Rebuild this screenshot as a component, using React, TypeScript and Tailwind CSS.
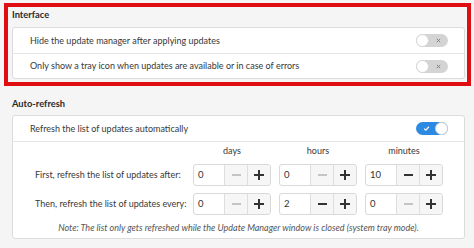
import React from "react";

function Toggle({ on }: { on: boolean }) {
  if (on) {
    return (
      <div className="relative h-[13px] w-[32px] rounded-full bg-[#2d8ae2]">
        <svg className="absolute left-[7px] top-[3px]" width="7" height="7" viewBox="0 0 8 8">
          <path d="M1.2 4.2 L3.2 6 L6.8 2" fill="none" stroke="#fff" strokeWidth="1.3" />
        </svg>
        <div className="absolute right-[0px] top-[0px] h-[13px] w-[13px] rounded-full border border-[#d6d6d6] bg-white" />
      </div>
    );
  }
  return (
    <div className="relative h-[13px] w-[32px] rounded-full bg-[#d4d4d4]">
      <div className="absolute left-[0px] top-[0px] h-[13px] w-[13px] rounded-full border border-[#d6d6d6] bg-white" />
      <svg className="absolute right-[7px] top-[4px]" width="5" height="5" viewBox="0 0 6 6">
        <path d="M1 1 L5 5 M5 1 L1 5" fill="none" stroke="#7d7d7d" strokeWidth="1.1" />
      </svg>
    </div>
  );
}

function Spin({ value }: { value: number }) {
  const canDec = value > 0;
  return (
    <div className="flex h-[22px] w-[78px] rounded-[3px] border border-[#d9d9d9] bg-white text-[9.5px] text-[#333]">
      <div className="flex w-[30px] items-center pl-[4px]">{value}</div>
      <div className="flex w-[23px] items-center justify-center border-l border-[#dedede] bg-[#f6f6f6]">
        <div className={`h-[1.5px] w-[9px] ${canDec ? "bg-[#333]" : "bg-[#c4c4c4]"}`} />
      </div>
      <div className="relative flex w-[23px] items-center justify-center rounded-r-[3px] border-l border-[#dedede] bg-[#f6f6f6]">
        <div className="h-[1.5px] w-[10px] bg-[#333]" />
        <div className="absolute h-[10px] w-[1.5px] bg-[#333]" />
      </div>
    </div>
  );
}

export default function App() {
  const rows = [
    { label: "First, refresh the list of updates after:", values: [0, 0, 10] },
    { label: "Then, refresh the list of updates every:", values: [0, 2, 0] },
  ];

  return (
    <main
      className="h-[248px] w-[474px] overflow-hidden bg-[#f5f5f6] pt-[3px] text-[#383838]"
      style={{ fontFamily: 'Lato, "Noto Sans", sans-serif' }}
    >
      <section className="ml-[4px] w-[467px] border-[4px] border-[#e00d12] pb-[3px] pl-[4px] pr-[2px]">
        <h2 className="h-[16px] text-[9.3px] font-bold leading-[16px] text-[#2a2a2a]">Interface</h2>
        <div className="mt-[4px] rounded-[3px] border border-[#dcdcdc] bg-white text-[9px]">
          <div className="flex h-[25px] items-center justify-between pl-[17px] pr-[16px]">
            <span>Hide the update manager after applying updates</span>
            <Toggle on={false} />
          </div>
          <div className="flex h-[25px] items-center justify-between border-t border-[#e6e6e6] pl-[17px] pr-[16px]">
            <span>Only show a tray icon when updates are available or in case of errors</span>
            <Toggle on={false} />
          </div>
        </div>
      </section>

      <section className="ml-[12px] w-[453px] pt-[10px]">
        <h2 className="h-[16px] text-[9.3px] font-bold leading-[16px] text-[#2a2a2a]">Auto-refresh</h2>
        <div className="mt-[3px] rounded-[3px] border border-[#dcdcdc] bg-white text-[9px]">
          <div className="flex h-[25px] items-center justify-between pl-[17px] pr-[16px]">
            <span>Refresh the list of updates automatically</span>
            <Toggle on={true} />
          </div>
          <div className="border-t border-[#e6e6e6] pb-[3px] pt-[3px]">
            <div className="grid grid-cols-[150px_78px_78px_78px] items-center gap-x-2 gap-y-[7px] pl-[22px]">
              <div />
              <div className="text-center leading-[12px]">days</div>
              <div className="text-center leading-[12px]">hours</div>
              <div className="text-center leading-[12px]">minutes</div>
              {rows.map((r) => (
                <React.Fragment key={r.label}>
                  <div className="whitespace-nowrap">{r.label}</div>
                  {r.values.map((v, i) => (
                    <Spin key={i} value={v} />
                  ))}
                </React.Fragment>
              ))}
            </div>
            <p className="mt-[6px] text-center italic leading-[14px] text-[#555]">
              Note: The list only gets refreshed while the Update Manager window is closed (system tray mode).
            </p>
          </div>
        </div>
      </section>
    </main>
  );
}
